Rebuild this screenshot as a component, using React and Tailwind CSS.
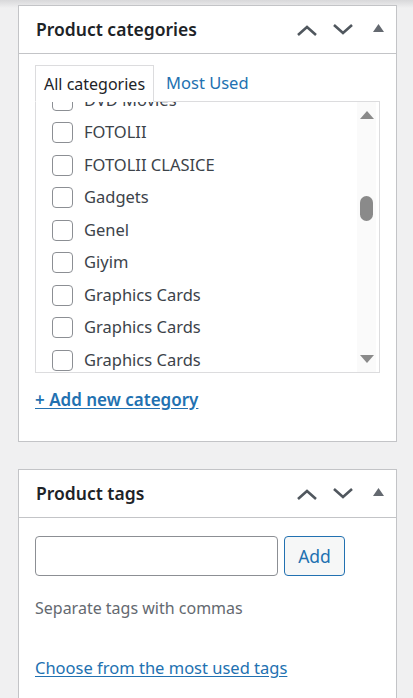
import React from "react";

const cats = [
  "DVD Movies",
  "FOTOLII",
  "FOTOLII CLASICE",
  "Gadgets",
  "Genel",
  "Giyim",
  "Graphics Cards",
  "Graphics Cards",
  "Graphics Cards",
  "Graphics Cards",
];

const HeaderIcons = () => (
  <div className="flex items-center">
    <svg width="22" height="14" viewBox="0 0 22 14" className="mr-[14px]">
      <path d="M2 12 L11 4 L20 12" fill="none" stroke="#50575e" strokeWidth="2.6" />
    </svg>
    <svg width="22" height="14" viewBox="0 0 22 14" className="mr-[19px]">
      <path d="M2 2 L11 10 L20 2" fill="none" stroke="#50575e" strokeWidth="2.6" />
    </svg>
    <svg width="11" height="8" viewBox="0 0 11 8" className="mb-[3px]">
      <path d="M0 8 L5.5 0 L11 8 Z" fill="#646970" />
    </svg>
  </div>
);

const Panel = ({ title, children, className = "" }) => (
  <div className={`bg-white border border-[#c3c4c7] ${className}`}>
    <div className="h-[48px] flex items-center justify-between pl-[17px] pr-[12px] border-b border-[#c3c4c7]">
      <h2 className="text-[17.5px] font-semibold text-[#1d2327]">{title}</h2>
      <HeaderIcons />
    </div>
    {children}
  </div>
);

export default function App() {
  return (
    <div
      className="w-[413px] h-[698px] overflow-hidden bg-[#f0f0f1] relative"
      style={{ fontFamily: '"Noto Sans", "Open Sans", sans-serif' }}
    >
      <div className="absolute top-0 left-0 right-0 h-[8px] bg-gradient-to-b from-[#d8d8da] to-[#f0f0f1]" />
      <div className="relative pt-[5px] pl-[18px] w-[397px]">
        <Panel title="Product categories" className="h-[437px]">
          <div className="px-[16px] pt-[11px]">
            <div className="flex items-end relative z-10 -mb-px">
              <div className="h-[37px] px-[8px] flex items-center border border-[#dcdcde] border-b-white bg-white text-[16px] text-[#1d2327]">
                All categories
              </div>
              <div className="h-[37px] px-[12px] flex items-center text-[16.5px] text-[#2271b1]">
                Most Used
              </div>
            </div>
            <div className="h-[272px] border border-[#dcdcde] flex overflow-hidden">
              <div className="flex-1 overflow-hidden">
                <div className="-mt-[18px] pl-[16px]">
                  {cats.map((c, i) => (
                    <div key={i} className="h-[32.5px] flex items-center">
                      <span className="w-[21px] h-[21px] border border-[#8c8f94] rounded-[4px] bg-white mr-[11px] shrink-0" />
                      <span className="text-[16.5px] text-[#3c434a] whitespace-nowrap">{c}</span>
                    </div>
                  ))}
                </div>
              </div>
              <div className="w-[19px] bg-[#fafafa] flex flex-col items-center justify-between py-[9px] mr-[3px]">
                <svg width="14" height="8" viewBox="0 0 14 8">
                  <path d="M0 8 L7 0 L14 8 Z" fill="#8a8a8a" />
                </svg>
                <div className="flex-1 w-full flex flex-col items-center pt-[77px]">
                  <div className="w-[13px] h-[25px] rounded-full bg-[#8a8a8a]" />
                </div>
                <svg width="14" height="8" viewBox="0 0 14 8">
                  <path d="M0 0 L7 8 L14 0 Z" fill="#8a8a8a" />
                </svg>
              </div>
            </div>
            <a className="inline-block mt-[14px] text-[17px] font-semibold text-[#2271b1] underline underline-offset-2">
              + Add new category
            </a>
          </div>
        </Panel>
        <Panel title="Product tags" className="mt-[27px] h-[240px]">
          <div className="px-[16px] pt-[18px]">
            <div className="flex items-center gap-[6px]">
              <div className="w-[243px] h-[40px] border border-[#8c8f94] rounded-[4px] bg-white" />
              <button className="w-[61px] h-[40px] border border-[#2271b1] rounded-[4px] bg-[#f6f7f7] text-[17.5px] text-[#2271b1]">
                Add
              </button>
            </div>
            <p className="mt-[20px] text-[16px] text-[#646970]">Separate tags with commas</p>
            <a className="inline-block mt-[36px] text-[16.5px] text-[#2271b1] underline underline-offset-2">
              Choose from the most used tags
            </a>
          </div>
        </Panel>
      </div>
    </div>
  );
}
